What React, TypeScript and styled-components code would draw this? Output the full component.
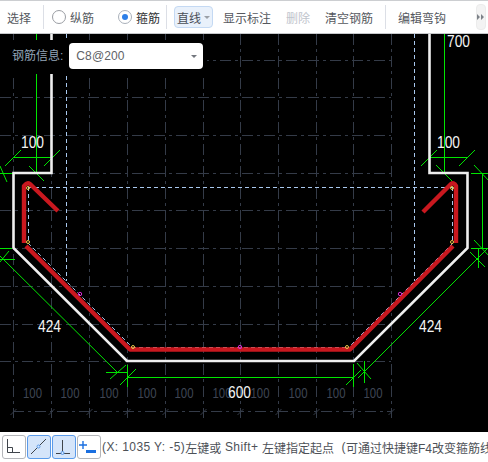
import React from "react";
import styled, { createGlobalStyle } from "styled-components";

const GlobalStyle = createGlobalStyle`
    html, body { margin: 0; padding: 0; background: #fff; }
    body { font-family: "Liberation Sans", "Noto Sans CJK SC", sans-serif; }
`;

const Page = styled.div`
    width: 488px;
    height: 462px;
    display: flex;
    flex-direction: column;
    overflow: hidden;
`;

const Toolbar = styled.div`
    position: relative;
    height: 34px;
    flex: none;
    box-sizing: border-box;
    border-top: 1px solid #ccced1;
    border-bottom: 1px solid #c6c8cb;
    background: #fff;
    display: flex;
    align-items: center;
    padding-left: 7px;
    font-size: 12px;
    color: #55585e;
    white-space: nowrap;
`;

const ToolText = styled.span<{ $gap: number; $disabled?: boolean }>`
    margin-right: ${(p) => p.$gap}px;
    color: ${(p) => (p.$disabled ? "#c0c4cc" : "#55585e")};
`;

const Separator = styled.i<{ $gap: number }>`
    width: 1px;
    height: 24px;
    background: #dcdfe6;
    margin-right: ${(p) => p.$gap}px;
`;

const RadioItem = styled.label<{ $gap: number; $checked?: boolean }>`
    display: flex;
    align-items: center;
    gap: 4px;
    margin-right: ${(p) => p.$gap}px;
    color: ${(p) => (p.$checked ? "#303133" : "#55585e")};
`;

const RadioDot = styled.span<{ $checked?: boolean }>`
    width: 14px;
    height: 14px;
    box-sizing: border-box;
    border-radius: 50%;
    border: 1px solid ${(p) => (p.$checked ? "#a9b0ba" : "#9a9da3")};
    display: flex;
    align-items: center;
    justify-content: center;
    &::after {
        content: "";
        width: 6px;
        height: 6px;
        border-radius: 50%;
        background: ${(p) => (p.$checked ? "#2d7fe8" : "transparent")};
    }
`;

const SplitButton = styled.div`
    width: 39px;
    height: 22px;
    margin-right: 10px;
    box-sizing: border-box;
    border: 1px solid #c4d9f3;
    border-radius: 4px;
    background: #e9f1fb;
    display: flex;
    align-items: center;
    gap: 3px;
    padding-left: 2px;
    color: #4a4f57;
`;

const Caret = styled.span<{ $color: string }>`
    width: 0;
    height: 0;
    border-left: 3px solid transparent;
    border-right: 3px solid transparent;
    border-top: 3px solid ${(p) => p.$color};
`;

const Overflow = styled.div`
    position: absolute;
    right: 2px;
    top: 3px;
    width: 10px;
    height: 26px;
    box-sizing: border-box;
    border: 1px solid #ececec;
    border-radius: 4px;
    background: #f3f3f3;
    display: flex;
    align-items: center;
    justify-content: center;
`;

const Canvas = styled.div`
    flex: 1;
    position: relative;
    background: #000;
    overflow: hidden;
    svg {
        display: block;
    }
`;

const FloatingForm = styled.div`
    position: absolute;
    left: 0;
    top: 6px;
    width: 207px;
    height: 34px;
    box-sizing: border-box;
    padding: 3px 0 0 12px;
    background: #000;
    display: flex;
    align-items: flex-start;
    gap: 6px;
    font-size: 12px;
    line-height: 26px;
    color: #93a5b8;
`;

const Select = styled.div`
    width: 134px;
    height: 26px;
    box-sizing: border-box;
    border-radius: 4px;
    background: #fff;
    display: flex;
    align-items: center;
    justify-content: space-between;
    padding: 0 6px 0 7px;
    font-size: 12px;
    letter-spacing: 0.1px;
    color: #606266;
`;

const StatusBar = styled.div`
    height: 30px;
    flex: none;
    background: #fff;
    display: flex;
    align-items: center;
    padding-left: 2px;
    font-size: 12px;
    color: #4d5157;
    white-space: pre;
    overflow: hidden;
`;

const Latin = styled.span`
    letter-spacing: 0.4px;
`;

const SnapButton = styled.div<{ $active?: boolean }>`
    width: 24px;
    height: 24px;
    flex: none;
    margin-right: 1px;
    box-sizing: border-box;
    border-radius: 3px;
    border: 1px solid ${(p) => (p.$active ? "#5b9bea" : "#b4b6ba")};
    background: ${(p) => (p.$active ? "#d5e5fa" : "#fff")};
    svg {
        display: block;
    }
`;

const GrayLabel = styled.text`
    font-family: "Liberation Sans", sans-serif;
    font-size: 14px;
    fill: #3f4654;
`;

const WhiteLabel = styled.text`
    font-family: "Liberation Sans", sans-serif;
    font-size: 16px;
    fill: #f4f4f4;
`;

const GRID_X = [13.5, 51.5, 89.5, 127.5, 165.5, 203.5, 240.5, 278.5, 316.5, 353.5, 391.5];
const GRID_Y = [26, 63, 101, 139, 176, 214, 252, 290, 327];
const GRAY_LABELS = [32.5, 70, 109, 147, 184, 222, 260, 298, 336, 373];

// every y below is relative to the canvas, the toolbar takes the first 34px
const y = (v: number) => v - 34;

const GREEN_LINES: [number, number, number, number][] = [
    [36.5, 34, 36.5, 173], [13, 157.5, 52, 157.5], [5, 166, 21, 150], [44, 166, 60, 150],
    [0, 173.5, 13, 173.5], [26, 173.5, 48, 173.5], [29, 166, 44, 181], [0, 166, 7, 182],
    [0, 248.5, 12, 248.5], [0, 259.5, 15, 259.5], [0, 262, 9, 251], [0, 256, 117, 372],
    [106, 372.5, 127, 372.5], [110, 379, 126, 365], [127.5, 365, 127.5, 387], [127, 377.5, 354, 377.5],
    [120, 385, 136, 369], [353.5, 364, 353.5, 387], [346, 385, 361, 370], [364.5, 361, 364.5, 383],
    [357, 363, 371, 379], [358, 378, 488, 248], [470, 252, 485, 267], [478.5, 248, 478.5, 268],
    [471, 248.5, 488, 248.5], [482.5, 173, 482.5, 248], [474, 165, 490, 182], [474, 240, 490, 257],
    [471, 173.5, 488, 173.5], [444.5, 34, 444.5, 173], [429, 157.5, 467, 157.5], [421, 166, 437, 150],
    [459, 166, 475, 150], [433, 173.5, 455, 173.5], [436, 165, 452, 181],
];

const WHITE_TEXT: [string, number, number][] = [
    ["100", 21, 148], ["100", 437, 148], ["700", 447, 47], ["424", 38, 332], ["424", 419, 332], ["600", 228, 398],
];

const Drawing: React.FC = () => (
    <svg width="488" height="398" viewBox="0 0 488 398">
        <g stroke="#343b48" strokeWidth="1" fill="none" strokeDasharray="11 4 3 4">
            {GRID_X.map((gx) => (
                <line key={gx} x1={gx} y1={0} x2={gx} y2={384} />
            ))}
            {GRID_Y.map((gy) => (
                <line key={gy} x1={0} y1={gy + 0.5} x2={391} y2={gy + 0.5} />
            ))}
            <line x1={13} y1={377.5} x2={391} y2={377.5} />
        </g>
        <g stroke="#343b48" strokeWidth="1">
            {GRID_X.map((gx) => (
                <line key={gx} x1={gx - 3} y1={381} x2={gx + 3} y2={375} />
            ))}
        </g>
        {GRAY_LABELS.map((cx) => (
            <GrayLabel key={cx} x={cx} y={y(398)} textAnchor="middle" textLength={19} lengthAdjust="spacingAndGlyphs">100</GrayLabel>
        ))}
        <g stroke="#a9c8ee" strokeWidth="1" fill="none" strokeDasharray="4 3">
            <line x1={66.5} y1={0} x2={66.5} y2={y(281)} />
            <line x1={414.5} y1={0} x2={414.5} y2={y(281)} />
            <line x1={28} y1={y(187.5)} x2={453} y2={y(187.5)} />
            <line x1={28.5} y1={y(187)} x2={28.5} y2={y(243)} />
            <line x1={452.5} y1={y(187)} x2={452.5} y2={y(243)} />
            <line x1={28} y1={y(243)} x2={132} y2={y(347)} />
            <line x1={453} y1={y(243)} x2={349} y2={y(347)} />
            <line x1={132} y1={y(347.5)} x2={349} y2={y(347.5)} stroke="#dfe6ee" />
        </g>
        <g stroke="#00e600" strokeWidth="1" fill="none">
            {GREEN_LINES.map(([x1, y1, x2, y2], i) => (
                <line key={i} x1={x1} y1={y(y1)} x2={x2} y2={y(y2)} />
            ))}
        </g>
        <polyline
            points={`51.5,${y(34)} 51.5,${y(173)} 13.5,${y(173)} 13.5,${y(248)} 127,${y(361)} 354,${y(361)} 467.5,${y(248)} 467.5,${y(173)} 429.5,${y(173)} 429.5,${y(34)}`}
            stroke="#efefef" strokeWidth="2.6" fill="none"
        />
        <g stroke="#c9181f" strokeWidth="4.4" fill="none" strokeLinejoin="round">
            <path d={`M58 ${y(211)} L30 ${y(184)} Q27 ${y(182)} 24 ${y(186)} L24 ${y(243)}`} />
            <path d={`M26 ${y(246)} L130 ${y(349.5)} L350 ${y(349.5)} L453 ${y(246)}`} />
            <path d={`M423 ${y(212)} L451 ${y(184)} Q454 ${y(182)} 456 ${y(186)} L456 ${y(243)}`} />
        </g>
        <g fill="none" strokeWidth="1">
            <circle cx={28} cy={y(188)} r={1.5} stroke="#e8c84a" />
            <circle cx={28} cy={y(242)} r={1.5} stroke="#e8c84a" />
            <circle cx={452} cy={y(188)} r={1.5} stroke="#e8c84a" />
            <circle cx={452} cy={y(242)} r={1.5} stroke="#e8c84a" />
            <circle cx={133} cy={y(347)} r={1.5} stroke="#e8c84a" />
            <circle cx={347} cy={y(347)} r={1.5} stroke="#e8c84a" />
            <circle cx={80} cy={y(294)} r={1.7} stroke="#d42ad4" />
            <circle cx={240} cy={y(347)} r={1.7} stroke="#d42ad4" />
            <circle cx={400} cy={y(294)} r={1.7} stroke="#d42ad4" />
        </g>
        {WHITE_TEXT.map(([t, tx, ty]) => (
            <WhiteLabel key={`${t}${tx}`} x={tx} y={y(ty)} textLength={23} lengthAdjust="spacingAndGlyphs">{t}</WhiteLabel>
        ))}
    </svg>
);

export default function App() {
    return (
        <Page>
            <GlobalStyle />
            <Toolbar>
                <ToolText $gap={12}>选择</ToolText>
                <Separator $gap={8} />
                <RadioItem $gap={24}><RadioDot />纵筋</RadioItem>
                <RadioItem $gap={6} $checked><RadioDot $checked />箍筋</RadioItem>
                <Separator $gap={7} />
                <SplitButton>直线<Caret $color="#9aa0a8" /></SplitButton>
                <ToolText $gap={15}>显示标注</ToolText>
                <ToolText $gap={15} $disabled>删除</ToolText>
                <ToolText $gap={12}>清空钢筋</ToolText>
                <Separator $gap={12} />
                <ToolText $gap={0}>编辑弯钩</ToolText>
                <Overflow>
                    <svg width="8" height="6" viewBox="0 0 8 6" fill="#7d8289">
                        <path d="M0 0l3 3-3 3zM4 0l3 3-3 3z" />
                    </svg>
                </Overflow>
            </Toolbar>
            <Canvas>
                <Drawing />
                <FloatingForm>
                    钢筋信息:
                    <Select>C8@200<Caret $color="#73777e" /></Select>
                </FloatingForm>
            </Canvas>
            <StatusBar>
                <SnapButton>
                    <svg width="22" height="22" viewBox="0 0 22 22" fill="none" stroke="#3f444b">
                        <path d="M4.5 3v13.5H17M4.5 11.5h5v5" />
                    </svg>
                </SnapButton>
                <SnapButton $active>
                    <svg width="22" height="22" viewBox="0 0 22 22" fill="none" stroke="#3f444b">
                        <path d="M3 18L18 3" />
                        <circle cx="10.5" cy="10.5" r="1.5" stroke="#5b9bea" fill="#d5e5fa" />
                    </svg>
                </SnapButton>
                <SnapButton $active>
                    <svg width="22" height="22" viewBox="0 0 22 22" fill="none" stroke="#3f444b">
                        <path d="M9.5 4v13.5M3 17.5h14" />
                        <circle cx="9.5" cy="17" r="1.5" stroke="#5b9bea" fill="#d5e5fa" />
                    </svg>
                </SnapButton>
                <SnapButton>
                    <svg width="22" height="22" viewBox="0 0 22 22" fill="none">
                        <path d="M5 5v8M1 9h8" stroke="#1a6fe0" strokeWidth="1.4" />
                        <path d="M8 14h10v3H8z" fill="#1a6fe0" />
                    </svg>
                </SnapButton>
                <Latin>(X: 1035 Y: -5)</Latin>左键或<Latin> Shift+ </Latin>左键指定起点<Latin>  (</Latin>可通过快捷键F4改变箍筋线
            </StatusBar>
        </Page>
    );
}
